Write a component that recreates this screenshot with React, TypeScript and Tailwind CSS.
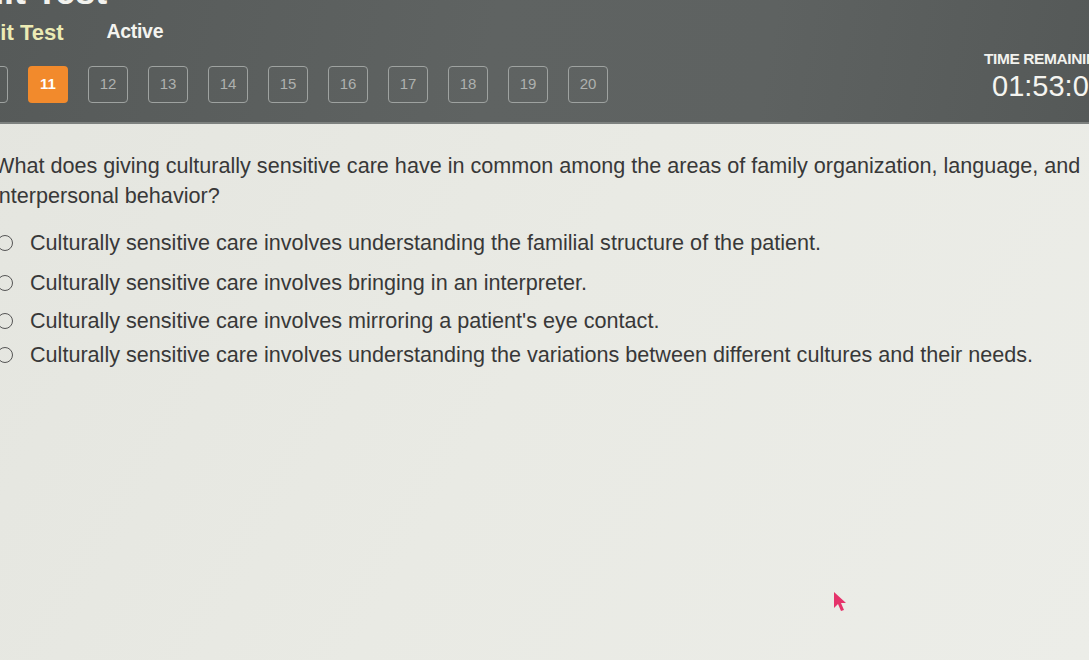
import React from "react";

const nums = [10, 11, 12, 13, 14, 15, 16, 17, 18, 19, 20];

const options = [
  { text: "Culturally sensitive care involves understanding the familial structure of the patient.", mt: "mt-[0px]" },
  { text: "Culturally sensitive care involves bringing in an interpreter.", mt: "mt-[12px]" },
  { text: "Culturally sensitive care involves mirroring a patient's eye contact.", mt: "mt-[10px]" },
  { text: "Culturally sensitive care involves understanding the variations between different cultures and their needs.", mt: "mt-[6px]" },
];

export default function App() {
  return (
    <div
      className="relative w-[1089px] h-[660px] overflow-hidden bg-[linear-gradient(120deg,#e4e5df_0%,#e9eae4_50%,#ecede8_100%)]"
      style={{ fontFamily: '"Liberation Sans", Arial, sans-serif' }}
    >
      {/* Header */}
      <div className="h-[124px] bg-[linear-gradient(100deg,#565a59_0%,#5f6362_45%,#5e6261_70%,#555958_100%)] border-b-[2px] border-[#7d817f] overflow-hidden">
        <div className="ml-[-44px] mt-[-26px] text-[36px] font-bold leading-[36px] text-[#f2f2ee] whitespace-nowrap">
          Unit Test
        </div>
        <div className="flex items-center mt-[10px] h-[24px] whitespace-nowrap">
          <span className="ml-[-29px] text-[22px] font-bold text-[#ecebb4]">Unit Test</span>
          <span className="ml-[43px] text-[19.5px] font-bold text-[#f4f4f0] tracking-[-0.3px]">Active</span>
        </div>
        <div className="flex items-end mt-[7px] ml-[-32px] whitespace-nowrap">
          <div className="flex gap-[20px]">
            {nums.map((n) =>
              n === 11 ? (
                <div
                  key={n}
                  className="w-[40px] h-[37px] rounded-[4px] bg-[#f28a2c] flex items-center justify-center text-[15px] font-bold text-white"
                >
                  {n}
                </div>
              ) : (
                <div
                  key={n}
                  className="w-[40px] h-[37px] rounded-[4px] border-[1.5px] border-[#9ea2a0] flex items-center justify-center text-[15px] text-[#aeb1af]"
                >
                  {n}
                </div>
              )
            )}
          </div>
          <div className="ml-[376px] mb-[2px] flex flex-col items-start leading-none">
            <span className="text-[15.5px] font-bold tracking-[-0.4px] text-[#f2f2ee]">TIME REMAINING</span>
            <span className="ml-[8px] mt-[5px] text-[29px] text-[#f4f4f0]">01:53:00</span>
          </div>
        </div>
      </div>

      {/* Question */}
      <div className="ml-[-6px] mt-[27px] text-[21.6px] leading-[30px] text-[#383838] whitespace-nowrap">
        What does giving culturally sensitive care have in common among the areas of family organization, language, and
        <br />
        interpersonal behavior?
      </div>

      <div className="mt-[18px] flex flex-col">
        {options.map((o, i) => (
          <div key={i} className={`flex items-center h-[28px] ${o.mt}`}>
            <div className="ml-[-3px] w-[16px] h-[16px] rounded-full border-[1.5px] border-[#555] shrink-0" />
            <span className="ml-[17px] text-[21.6px] text-[#383838] whitespace-nowrap">{o.text}</span>
          </div>
        ))}
      </div>

      {/* cursor */}
      <svg className="absolute left-[832px] top-[591px]" width="16" height="22" viewBox="0 0 16 22">
        <path d="M2 1 L2 17 L6 13 L9 20 L12 19 L9 12 L14 12 Z" fill="#e5336b" />
      </svg>
    </div>
  );
}
